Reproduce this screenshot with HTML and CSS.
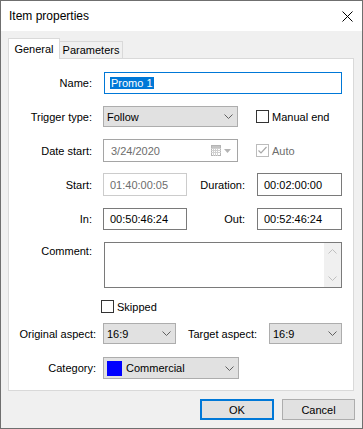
FILE: index.html
```html
<!DOCTYPE html>
<html lang="en">

<head>
  <meta charset="UTF-8">
  <link rel="stylesheet" href="styles.css">
</head>

<body>
  <div class="window">
    <div class="titlebar">
      <span class="title">Item properties</span>
      <svg class="close" width="11" height="11" viewBox="0 0 11 11">
        <path d="M0.5 0.5L10.5 10.5M10.5 0.5L0.5 10.5" stroke="#000" stroke-width="1" fill="none" />
      </svg>
    </div>

    <div class="content">
      <!-- Tabs -->
      <div class="tabs">
        <div class="tab active">General</div>
        <div class="tab">Parameters</div>
      </div>

      <div class="panel">
        <div class="row r-name">
          <span class="lbl">Name:</span>
          <div class="field name-field"><span class="sel">Promo 1</span></div>
        </div>

        <div class="row r-trigger">
          <span class="lbl">Trigger type:</span>
          <div class="select w-wide">
            <span class="val">Follow</span>
            <svg class="chev" width="9" height="5" viewBox="0 0 9 5"><polyline points="0.5,0.5 4.5,4.5 8.5,0.5" fill="none" stroke="#606060" /></svg>
          </div>
          <div class="check manual"></div>
          <span class="check-lbl">Manual end</span>
        </div>

        <div class="row r-date">
          <span class="lbl">Date start:</span>
          <div class="date">
            <span class="val">3/24/2020</span>
            <svg class="cal" width="10" height="11" viewBox="0 0 10 11">
              <rect x="0.5" y="0.5" width="9" height="10" fill="#fff" stroke="#b4b4b4" />
              <path d="M0 3.5H10M0 5.5H10M0 7.5H10M2.5 3V11M4.5 3V11M6.5 3V11" stroke="#d0d0d0" />
              <rect x="1" y="1" width="8" height="2" fill="#c4c4c4" />
            </svg>
            <svg class="tri" width="7" height="4" viewBox="0 0 7 4"><polygon points="0,0 7,0 3.5,4" fill="#b4b4b4" /></svg>
          </div>
          <div class="check manual off">
            <svg width="11" height="11" viewBox="0 0 11 11"><polyline points="1.5,5.5 4,8 9.5,2" fill="none" stroke="#a8a8a8" stroke-width="1.2" /></svg>
          </div>
          <span class="check-lbl dim">Auto</span>
        </div>

        <div class="row r-start">
          <span class="lbl">Start:</span>
          <div class="field time off">01:40:00:05</div>
          <span class="lbl-r">Duration:</span>
          <div class="field time w-right">00:02:00:00</div>
        </div>

        <div class="row r-in">
          <span class="lbl">In:</span>
          <div class="field time">00:50:46:24</div>
          <span class="lbl-r">Out:</span>
          <div class="field time w-right">00:52:46:24</div>
        </div>

        <div class="row r-comment">
          <span class="lbl top">Comment:</span>
          <div class="memo">
            <div class="scroll">
              <svg width="9" height="5" viewBox="0 0 9 5"><polyline points="0.5,4.5 4.5,0.5 8.5,4.5" fill="none" stroke="#c0c0c0" /></svg>
              <svg width="9" height="5" viewBox="0 0 9 5"><polyline points="0.5,0.5 4.5,4.5 8.5,0.5" fill="none" stroke="#c0c0c0" /></svg>
            </div>
          </div>
        </div>

        <div class="row r-skip">
          <span class="lbl"></span>
          <div class="check"></div>
          <span class="check-lbl">Skipped</span>
        </div>

        <div class="row r-aspect">
          <span class="lbl wide">Original aspect:</span>
          <div class="select w-small">
            <span class="val">16:9</span>
            <svg class="chev" width="9" height="5" viewBox="0 0 9 5"><polyline points="0.5,0.5 4.5,4.5 8.5,0.5" fill="none" stroke="#606060" /></svg>
          </div>
          <span class="lbl-aspect">Target aspect:</span>
          <div class="select w-small">
            <span class="val">16:9</span>
            <svg class="chev" width="9" height="5" viewBox="0 0 9 5"><polyline points="0.5,0.5 4.5,4.5 8.5,0.5" fill="none" stroke="#606060" /></svg>
          </div>
        </div>

        <div class="row r-cat">
          <span class="lbl wide">Category:</span>
          <div class="select w-cat">
            <span class="swatch"></span>
            <span class="val">Commercial</span>
            <svg class="chev" width="9" height="5" viewBox="0 0 9 5"><polyline points="0.5,0.5 4.5,4.5 8.5,0.5" fill="none" stroke="#606060" /></svg>
          </div>
        </div>
      </div>

      <!-- Buttons -->
      <div class="actions">
        <button class="btn default" type="button">OK</button>
        <button class="btn" type="button">Cancel</button>
      </div>
    </div>
  </div>
</body>

</html>
```

FILE: styles.css
```css
body, html {
  margin: 0;
  padding: 0;
  font-family: "Liberation Sans", Arial, sans-serif;
  font-size: 11px;
  color: #000000;
  background: #f0f0f0;
}

.window {
  width: 363px;
  height: 429px;
  box-sizing: border-box;
  border: 1px solid #6f6f6f;
  background: #f0f0f0;
}

.titlebar {
  height: 30px;
  background: #ffffff;
  display: flex;
  align-items: center;
  justify-content: space-between;
  padding: 0 9px 0 8px;
}

.title {
  font-size: 12px;
}

.content {
  padding: 7px 8px 0 7px;
}

/* Tabs */
.tabs {
  display: flex;
  align-items: flex-end;
  height: 20px;
}

.tab {
  box-sizing: border-box;
  height: 17px;
  width: 64px;
  margin-left: -1px;
  border: 1px solid #d9d9d9;
  border-bottom: none;
  background: #f0f0f0;
  display: flex;
  align-items: center;
  justify-content: center;
}

.tab.active {
  width: 52px;
  height: 21px;
  margin-left: 0;
  margin-bottom: -1px;
  background: #ffffff;
  position: relative;
  z-index: 1;
}

.panel {
  box-sizing: border-box;
  width: 346px;
  height: 333px;
  border: 1px solid #d9d9d9;
  background: #ffffff;
}

/* Rows */
.row {
  display: flex;
  align-items: center;
}

.lbl {
  width: 83px;
  margin-right: 11px;
  text-align: right;
  flex-shrink: 0;
}

.lbl.wide {
  width: 87px;
  margin-right: 7px;
}

.lbl.top {
  align-self: flex-start;
  margin-top: 3px;
}

.lbl-r {
  width: 58px;
  margin-right: 12px;
  text-align: right;
}

.lbl-aspect {
  width: 81px;
  margin-right: 12px;
  text-align: right;
}

.r-name { margin-top: 13px; }
.r-trigger { margin-top: 12px; }
.r-date { margin-top: 12px; }
.r-start { margin-top: 11px; }
.r-in { margin-top: 12px; }
.r-comment { margin-top: 12px; }
.r-skip { margin-top: 12px; }
.r-aspect { margin-top: 10px; }
.r-cat { margin-top: 13px; }

/* Text boxes */
.field {
  box-sizing: border-box;
  height: 22px;
  border: 1px solid #7a7a7a;
  background: #ffffff;
  display: flex;
  align-items: center;
  padding-left: 6px;
}

.name-field {
  width: 238px;
  margin-left: 1px;
  border-color: #0078d7;
  padding-left: 5px;
}

.sel {
  background: #0078d7;
  color: #ffffff;
  line-height: 12px;
  padding: 0 1px;
}

.time {
  width: 84px;
}

.r-start .time {
  height: 23px;
}

.time.w-right {
  width: 85px;
}

.time.off {
  border-color: #cccccc;
  color: #6d6d6d;
}

/* Combo boxes */
.select {
  box-sizing: border-box;
  height: 21px;
  border: 1px solid #adadad;
  background: #e1e1e1;
  display: flex;
  align-items: center;
  padding: 0 4px 0 3px;
}

.select .val {
  flex: 1;
}

.w-wide { width: 135px; }
.w-small { width: 73px; }
.w-cat { width: 136px; height: 22px; }

.swatch {
  width: 15px;
  height: 15px;
  background: #0000ff;
  margin-right: 4px;
}

.date {
  box-sizing: border-box;
  width: 135px;
  height: 23px;
  border: 1px solid #a5a5a5;
  background: #ffffff;
  color: #6d6d6d;
  display: flex;
  align-items: center;
  padding: 0 6px 0 7px;
}

.date .val {
  flex: 1;
}

.tri {
  margin-left: 3px;
}

/* Checkboxes */
.check {
  box-sizing: border-box;
  width: 13px;
  height: 13px;
  border: 1px solid #333333;
  background: #ffffff;
  display: flex;
  align-items: center;
  justify-content: center;
}

.check.manual {
  margin-left: 18px;
}

.check.off {
  border-color: #bcbcbc;
}

.check-lbl {
  margin-left: 3px;
}

.check-lbl.dim {
  color: #6d6d6d;
}

.r-skip .lbl {
  margin-right: 9px;
}

/* Comment box */
.memo {
  box-sizing: border-box;
  width: 238px;
  height: 46px;
  margin-left: 1px;
  border: 1px solid #7a7a7a;
  background: #ffffff;
  display: flex;
  justify-content: flex-end;
}

.scroll {
  width: 17px;
  background: #f0f0f0;
  display: flex;
  flex-direction: column;
  justify-content: space-between;
  align-items: center;
  padding: 6px 0;
}

/* Buttons */
.actions {
  display: flex;
  justify-content: flex-end;
  gap: 8px;
  margin-top: 8px;
  margin-right: -1px;
}

.btn {
  box-sizing: border-box;
  width: 73px;
  height: 21px;
  border: 1px solid #adadad;
  background: #e1e1e1;
  font-family: "Liberation Sans", Arial, sans-serif;
  font-size: 11px;
  color: #000000;
  padding: 0;
}

.btn.default {
  width: 74px;
  border: 2px solid #0078d7;
}
```
